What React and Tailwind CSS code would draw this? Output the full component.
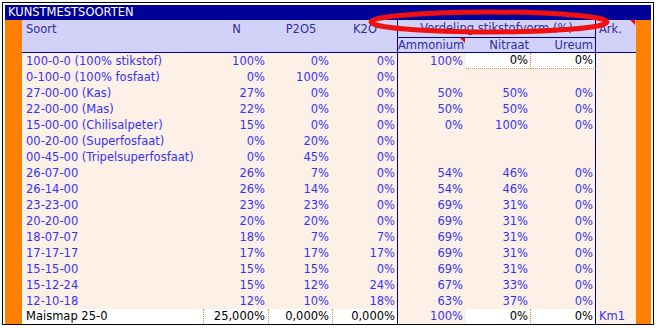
import React from "react";

const rows = [
  ["100-0-0 (100% stikstof)", "100%", "0%", "0%", "100%", "0%", "0%"],
  ["0-100-0 (100% fosfaat)", "0%", "100%", "0%", "", "", ""],
  ["27-00-00 (Kas)", "27%", "0%", "0%", "50%", "50%", "0%"],
  ["22-00-00 (Mas)", "22%", "0%", "0%", "50%", "50%", "0%"],
  ["15-00-00 (Chilisalpeter)", "15%", "0%", "0%", "0%", "100%", "0%"],
  ["00-20-00 (Superfosfaat)", "0%", "20%", "0%", "", "", ""],
  ["00-45-00 (Tripelsuperfosfaat)", "0%", "45%", "0%", "", "", ""],
  ["26-07-00", "26%", "7%", "0%", "54%", "46%", "0%"],
  ["26-14-00", "26%", "14%", "0%", "54%", "46%", "0%"],
  ["23-23-00", "23%", "23%", "0%", "69%", "31%", "0%"],
  ["20-20-00", "20%", "20%", "0%", "69%", "31%", "0%"],
  ["18-07-07", "18%", "7%", "7%", "69%", "31%", "0%"],
  ["17-17-17", "17%", "17%", "17%", "69%", "31%", "0%"],
  ["15-15-00", "15%", "15%", "0%", "69%", "31%", "0%"],
  ["15-12-24", "15%", "12%", "24%", "67%", "33%", "0%"],
  ["12-10-18", "12%", "10%", "18%", "63%", "37%", "0%"]
];

const cols = "grid grid-cols-[182px_65px_64px_65px_68px_65px_65px_40px]";

// red comment marker in the top-right corner of a cell
const Marker = ({ right }) => (
  <div
    className={
      "absolute top-0 w-0 h-0 border-t-[5px] border-l-[5px] border-t-[#ff0000] border-l-transparent " +
      right
    }
  />
);

function DataRow({ r, first }) {
  const c = "h-4 leading-4 whitespace-nowrap text-right";
  return (
    <div className={cols + " text-[#3333ff]"}>
      <div className="h-4 leading-4 whitespace-nowrap pl-[4px]">{r[0]}</div>
      <div className={c + " pr-[4px]"}>{r[1]}</div>
      <div className={c + " pr-[4px]"}>{r[2]}</div>
      <div className={c + " pr-[2px] border-r border-[#000099]"}>{r[3]}</div>
      <div className={c + " pr-[3px]"}>{r[4]}</div>
      {first ? (
        <div className={c + " pr-[2px] bg-white text-black border-r border-b border-dotted border-[#ff8040] leading-[15px]"}>
          {r[5]}
        </div>
      ) : (
        <div className={c + " pr-[3px]"}>{r[5]}</div>
      )}
      {first ? (
        <div className="h-4 leading-[15px] text-right pr-[2px] bg-white text-black border-r border-r-[#000099] border-b border-b-[#ff8040] border-dotted [border-right-style:solid]">
          {r[6]}
        </div>
      ) : (
        <div className={c + " pr-[2px] border-r border-[#000099]"}>{r[6]}</div>
      )}
      <div className="h-4" />
    </div>
  );
}

export default function App() {
  const dot = "border-r border-b border-dotted border-[#ff8040]";
  return (
    <div className="relative w-[656px] h-[328px] bg-white overflow-hidden font-['DejaVu_Sans',sans-serif] text-[11.5px]">
      <div className="ml-[2px] mt-[2px] w-[652px] h-[323px] border border-black pt-[2px] px-[2px] overflow-hidden">
        <div className="h-[15px] leading-[15px] bg-[#000099] text-white pl-[3px]">KUNSTMESTSOORTEN</div>
        <div className="flex h-[304px]">
          <div className="w-[17px] bg-[#ff8000]" />
          <div className="w-[614px] bg-[#fdf0e6] overflow-hidden">
            <div className={cols + " grid-rows-[18px_14px] bg-[#d2d2f8] text-[#2e2ea0] border-b border-[#000099]"}>
              <div className="row-span-2 pl-[4px] leading-[18px]">Soort</div>
              <div className="row-span-2 text-center leading-[18px]">N</div>
              <div className="row-span-2 text-center leading-[18px]">P2O5</div>
              <div className="row-span-2 text-center leading-[18px] border-r border-[#000099]">K2O</div>
              <div className="col-span-3 text-center leading-[17px] border-r border-b border-[#000099]">
                Verdeling stikstofvorm (%)
              </div>
              <div className="row-span-2 col-start-8 row-start-1 relative pl-[3px] leading-[18px]">
                Ark.
                <Marker right="right-[1px]" />
              </div>
              <div className="relative text-right pr-[2px] leading-[14px] whitespace-nowrap">
                Ammonium
                <Marker right="right-[1px]" />
              </div>
              <div className="text-right pr-[2px] leading-[14px]">Nitraat</div>
              <div className="text-right pr-[2px] leading-[14px] border-r border-[#000099]">Ureum</div>
            </div>
            {rows.map((r, i) => (
              <DataRow key={i} r={r} first={i === 0} />
            ))}
            <div className={cols + " h-[15px] leading-[15px] whitespace-nowrap"}>
              <div className={"bg-white text-black pl-[4px] " + dot}>Maismap 25-0</div>
              <div className={"bg-white text-black text-right pr-[3px] " + dot}>25,000%</div>
              <div className={"bg-white text-black text-right pr-[3px] " + dot}>0,000%</div>
              <div className="bg-white text-black text-right pr-[2px] border-b border-dotted border-b-[#ff8040] border-r border-r-[#000099] [border-right-style:solid]">
                0,000%
              </div>
              <div className="text-[#3333ff] text-right pr-[3px]">100%</div>
              <div className={"bg-white text-black text-right pr-[2px] " + dot}>0%</div>
              <div className="bg-white text-black text-right pr-[2px] border-b border-dotted border-b-[#ff8040] border-r border-r-[#000099] [border-right-style:solid]">
                0%
              </div>
              <div className="text-[#3333ff] pl-[3px]">Km1</div>
            </div>
          </div>
          <div className="flex-1 bg-[#ff8000]" />
        </div>
      </div>
      <svg className="absolute left-0 top-0 pointer-events-none" width="656" height="328">
        <ellipse cx="489" cy="22" rx="118" ry="10" fill="none" stroke="#f01010" strokeWidth="5" />
      </svg>
    </div>
  );
}
